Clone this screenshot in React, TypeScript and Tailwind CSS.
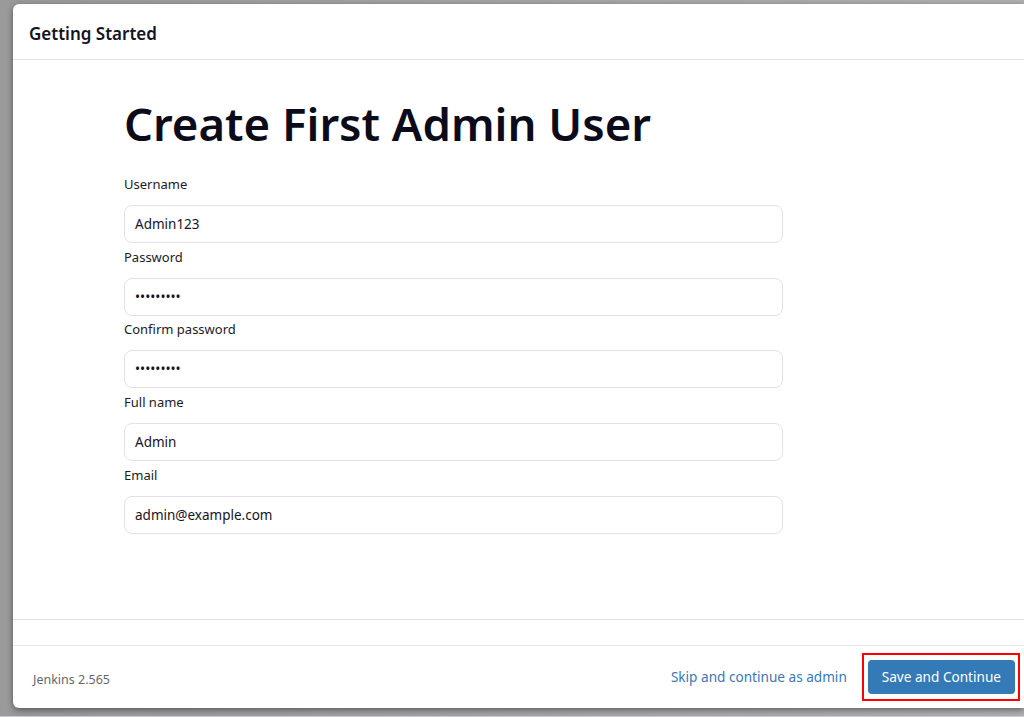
import React from 'react';

const fields = [
  { label: 'Username', value: 'Admin123', type: 'text' },
  { label: 'Password', value: 'password1', type: 'password' },
  { label: 'Confirm password', value: 'password1', type: 'password' },
  { label: 'Full name', value: 'Admin', type: 'text' },
  { label: 'Email', value: 'admin@example.com', type: 'text' },
];

export default function App() {
  return (
    <div
      className="h-[717px] w-[1024px] overflow-hidden flex flex-col bg-gradient-to-r from-[#9a9a9a] to-[#b0b0b0]"
      style={{ fontFamily: '"Noto Sans", "Open Sans", sans-serif' }}
    >
      <div className="flex-1 flex pt-[4px] pl-[13px] pb-[8px] min-h-0">
        <div className="flex-1 flex flex-col bg-white rounded-l-[6px] shadow-[0_2px_6px_rgba(0,0,0,0.45)]">
          {/* Header */}
          <div className="h-[56px] shrink-0 flex items-center pl-[16px] pt-[5px] border-b border-[#e4e4e4]">
            <h2 className="text-[17px] font-semibold text-[#14141f]">Getting Started</h2>
          </div>

          {/* Body */}
          <div className="flex-1 border-b border-[#e2e2e2] pl-[111px] pt-[31px]">
            <h1 className="text-[45.5px] leading-[64px] font-semibold text-[#0b0b1a]">
              Create First Admin User
            </h1>
            <div className="mt-[19px] w-[659px] flex flex-col">
              {fields.map((f) => (
                <div key={f.label} className="flex flex-col pb-[3.7px]">
                  <label className="text-[13px] leading-[20px] text-[#1b1b26]">{f.label}</label>
                  <input
                    readOnly
                    type={f.type}
                    value={f.value}
                    className="mt-[11px] h-[38px] rounded-[8px] border border-[#e1e1ef] px-[10px] text-[13.5px] text-[#14141f] outline-none"
                    style={{ fontFamily: 'inherit' }}
                  />
                </div>
              ))}
            </div>
          </div>

          <div className="h-[26px] shrink-0 border-b border-[#e6e6e6]" />

          {/* Footer */}
          <div className="h-[62px] shrink-0 flex items-center justify-between pl-[20px] pr-[4px]">
            <span className="text-[12.5px] text-[#666] mt-[6px]">Jenkins 2.565</span>
            <div className="flex items-center">
              <a className="text-[13.6px] text-[#3b78b6] mr-[15px] cursor-pointer">Skip and continue as admin</a>
              <div className="border-2 border-[#ff0000] pl-[4px] pr-[3px] py-[5px]">
                <button className="h-[34px] px-[14px] rounded-[4px] bg-[#337ab7] text-white text-[13.6px]">
                  Save and Continue
                </button>
              </div>
            </div>
          </div>
        </div>
      </div>
      <div className="h-[1px] bg-[#c8ccd2]" />
    </div>
  );
}
